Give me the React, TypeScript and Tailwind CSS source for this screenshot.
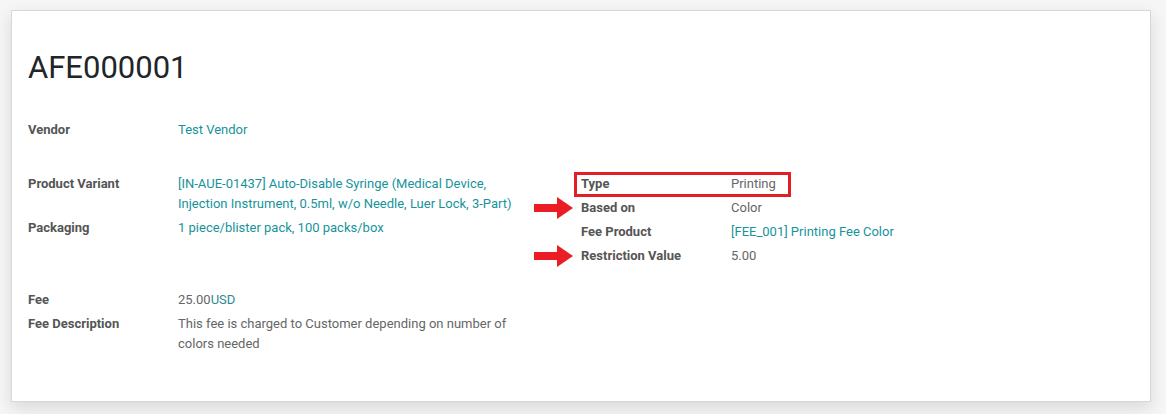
import React from 'react';

const labelCls = 'w-[150px] shrink-0 font-bold text-[#555555]';
const valueCls = 'w-[340px] text-[#666666]';
const linkCls = 'w-[340px] text-[#17939b]';

// red annotation arrow pointing right
const Arrow = () => (
  <svg
    width="40"
    height="22"
    viewBox="0 0 40 22"
    className="absolute left-[-47px] top-[-1px]"
  >
    <rect x="0" y="7" width="25" height="8" fill="#ec1c24" />
    <polygon points="23,0 39,11 23,22" fill="#ec1c24" />
  </svg>
);

const Row = ({
  label,
  children,
  className = '',
}: {
  label: string;
  children: React.ReactNode;
  className?: string;
}) => (
  <div className={`relative flex pb-[4.5px] ${className}`}>
    <div className={labelCls}>{label}</div>
    {children}
  </div>
);

const App = () => {
  return (
    <div
      className="min-h-[414px] w-[1166px] bg-[#f6f6f6] pt-[10px] pl-[11px] pr-[15px]"
      style={{ fontFamily: 'Roboto, "Liberation Sans", sans-serif' }}
    >
      <div className="h-[392px] border border-[#d6d6dd] bg-white pl-[16px] pt-[41px] text-[13px] leading-[19.5px] shadow-[0_6px_16px_0_rgba(0,0,0,0.12)]">
        {/* Title */}
        <h1 className="text-[31px] leading-[31px] font-normal text-[#212529]">AFE000001</h1>

        {/* Vendor */}
        <div className="mt-[37px]">
          <Row label="Vendor">
            <div className={linkCls}>Test Vendor</div>
          </Row>
        </div>

        {/* Product / Type group */}
        <div className="mt-[30px] flex">
          <div className="w-[553px]">
            <Row label="Product Variant">
              <div className={linkCls}>
                [IN-AUE-01437] Auto-Disable Syringe (Medical Device, Injection Instrument, 0.5ml, w/o
                Needle, Luer Lock, 3-Part)
              </div>
            </Row>
            <Row label="Packaging">
              <div className={linkCls}>1 piece/blister pack, 100 packs/box</div>
            </Row>
          </div>
          <div className="w-[500px]">
            <Row label="Type">
              <div className={valueCls}>Printing</div>
              <div className="absolute left-[-7px] top-[-2px] h-[25px] w-[217px] border-[3px] border-[#e31e24]" />
            </Row>
            <Row label="Based on">
              <Arrow />
              <div className={valueCls}>Color</div>
            </Row>
            <Row label="Fee Product">
              <div className={linkCls}>[FEE_001] Printing Fee Color</div>
            </Row>
            <Row label="Restriction Value">
              <Arrow />
              <div className={valueCls}>5.00</div>
            </Row>
          </div>
        </div>

        {/* Fee group */}
        <div className="mt-[20px]">
          <Row label="Fee">
            <div className={valueCls}>
              25.00<span className="text-[#2f8890]">USD</span>
            </div>
          </Row>
          <Row label="Fee Description">
            <div className={valueCls}>
              This fee is charged to Customer depending on number of colors needed
            </div>
          </Row>
        </div>
      </div>
    </div>
  );
};

export default App;
